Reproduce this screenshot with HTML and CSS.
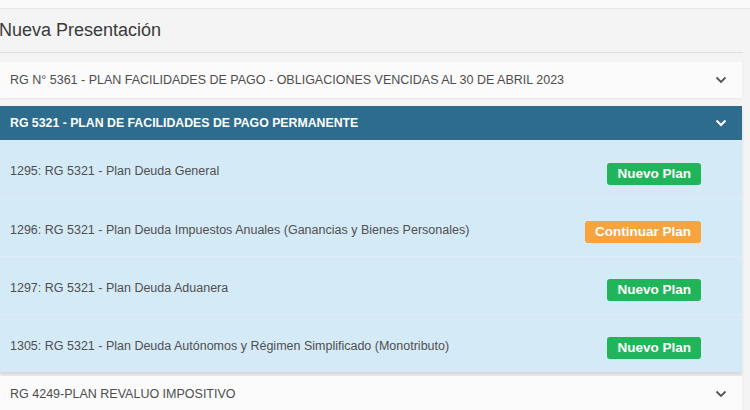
FILE: index.html
```html
<!DOCTYPE html>
<html lang="es">
<head>
  <meta charset="UTF-8">
  <title>Nueva Presentación</title>
  <link rel="stylesheet" href="styles.css">
</head>
<body>
  <div class="top-bar"></div>
  <div class="page">
    <div class="page-title">Nueva Presentación</div>

    <div class="panel">
      <div class="panel-head">
        <span>RG N° 5361 - PLAN FACILIDADES DE PAGO - OBLIGACIONES VENCIDAS AL 30 DE ABRIL 2023</span>
        <svg class="chev" viewBox="0 0 12 8"><path d="M1.5 1.5 6 6l4.5-4.5"/></svg>
      </div>
    </div>

    <div class="panel open">
      <div class="panel-head">
        <span>RG 5321 - PLAN DE FACILIDADES DE PAGO PERMANENTE</span>
        <svg class="chev" viewBox="0 0 12 8"><path d="M1.5 1.5 6 6l4.5-4.5"/></svg>
      </div>
      <div class="panel-body">
        <div class="row">
          <span>1295: RG 5321 - Plan Deuda General</span>
          <span class="badge green">Nuevo Plan</span>
        </div>
        <div class="row">
          <span>1296: RG 5321 - Plan Deuda Impuestos Anuales (Ganancias y Bienes Personales)</span>
          <span class="badge orange">Continuar Plan</span>
        </div>
        <div class="row">
          <span>1297: RG 5321 - Plan Deuda Aduanera</span>
          <span class="badge green">Nuevo Plan</span>
        </div>
        <div class="row">
          <span>1305: RG 5321 - Plan Deuda Autónomos y Régimen Simplificado (Monotributo)</span>
          <span class="badge green">Nuevo Plan</span>
        </div>
      </div>
    </div>

    <div class="panel">
      <div class="panel-head">
        <span>RG 4249-PLAN REVALUO IMPOSITIVO</span>
        <svg class="chev" viewBox="0 0 12 8"><path d="M1.5 1.5 6 6l4.5-4.5"/></svg>
      </div>
    </div>
  </div>
</body>
</html>
```

FILE: styles.css
```css
html, body {
  margin: 0;
  padding: 0;
  background-color: #f4f4f4;
  font-family: 'Liberation Sans', Arial, sans-serif;
  overflow: hidden;
}

.top-bar {
  height: 8px;
  background-color: #f9f9f9;
  border-bottom: 1px solid #e6e6e6;
}

.page {
  width: 743px;
}

.page-title {
  height: 43px;
  line-height: 43px;
  font-size: 18px;
  color: #3a3a3a;
  margin-left: -1px;
  border-bottom: 1px solid #dcdcdc;
  margin-bottom: 9px;
}

.panel {
  width: 742px;
  margin-bottom: 8px;
  background-color: #fbfbfb;
  box-shadow: 0 1px 2px rgba(0, 0, 0, 0.06);
}

.panel-head {
  height: 36px;
  display: flex;
  align-items: center;
  justify-content: space-between;
  padding: 0 15px 0 10px;
  font-size: 12.5px;
  color: #4d4d4d;
}

.chev {
  width: 12px;
  height: 8px;
  fill: none;
  stroke: #555;
  stroke-width: 1.8;
}

.open {
  margin-bottom: 4px;
  box-shadow: 0 3px 3px rgba(0, 0, 0, 0.12);
}

.open .panel-head {
  height: 34px;
  background-color: #2d6c8c;
  color: #fff;
  font-weight: bold;
  font-size: 12.3px;
}

.open .chev {
  stroke: #fff;
  stroke-width: 2;
}

.panel-body {
  background-color: #d4eaf7;
}

.row {
  height: 58px;
  display: flex;
  align-items: center;
  justify-content: space-between;
  padding: 4px 41px 0 10px;
  font-size: 12.5px;
  color: #505050;
  border-top: 1px solid #dcedf8;
  box-sizing: border-box;
}

.row:first-child {
  border-top: none;
}

.badge {
  height: 22px;
  line-height: 22px;
  padding: 0 10px;
  border-radius: 3px;
  color: #fff;
  font-weight: bold;
  font-size: 13.5px;
  margin-top: 5px;
}

.green {
  background-color: #20b55a;
}

.orange {
  background-color: #f7a33e;
}
```
